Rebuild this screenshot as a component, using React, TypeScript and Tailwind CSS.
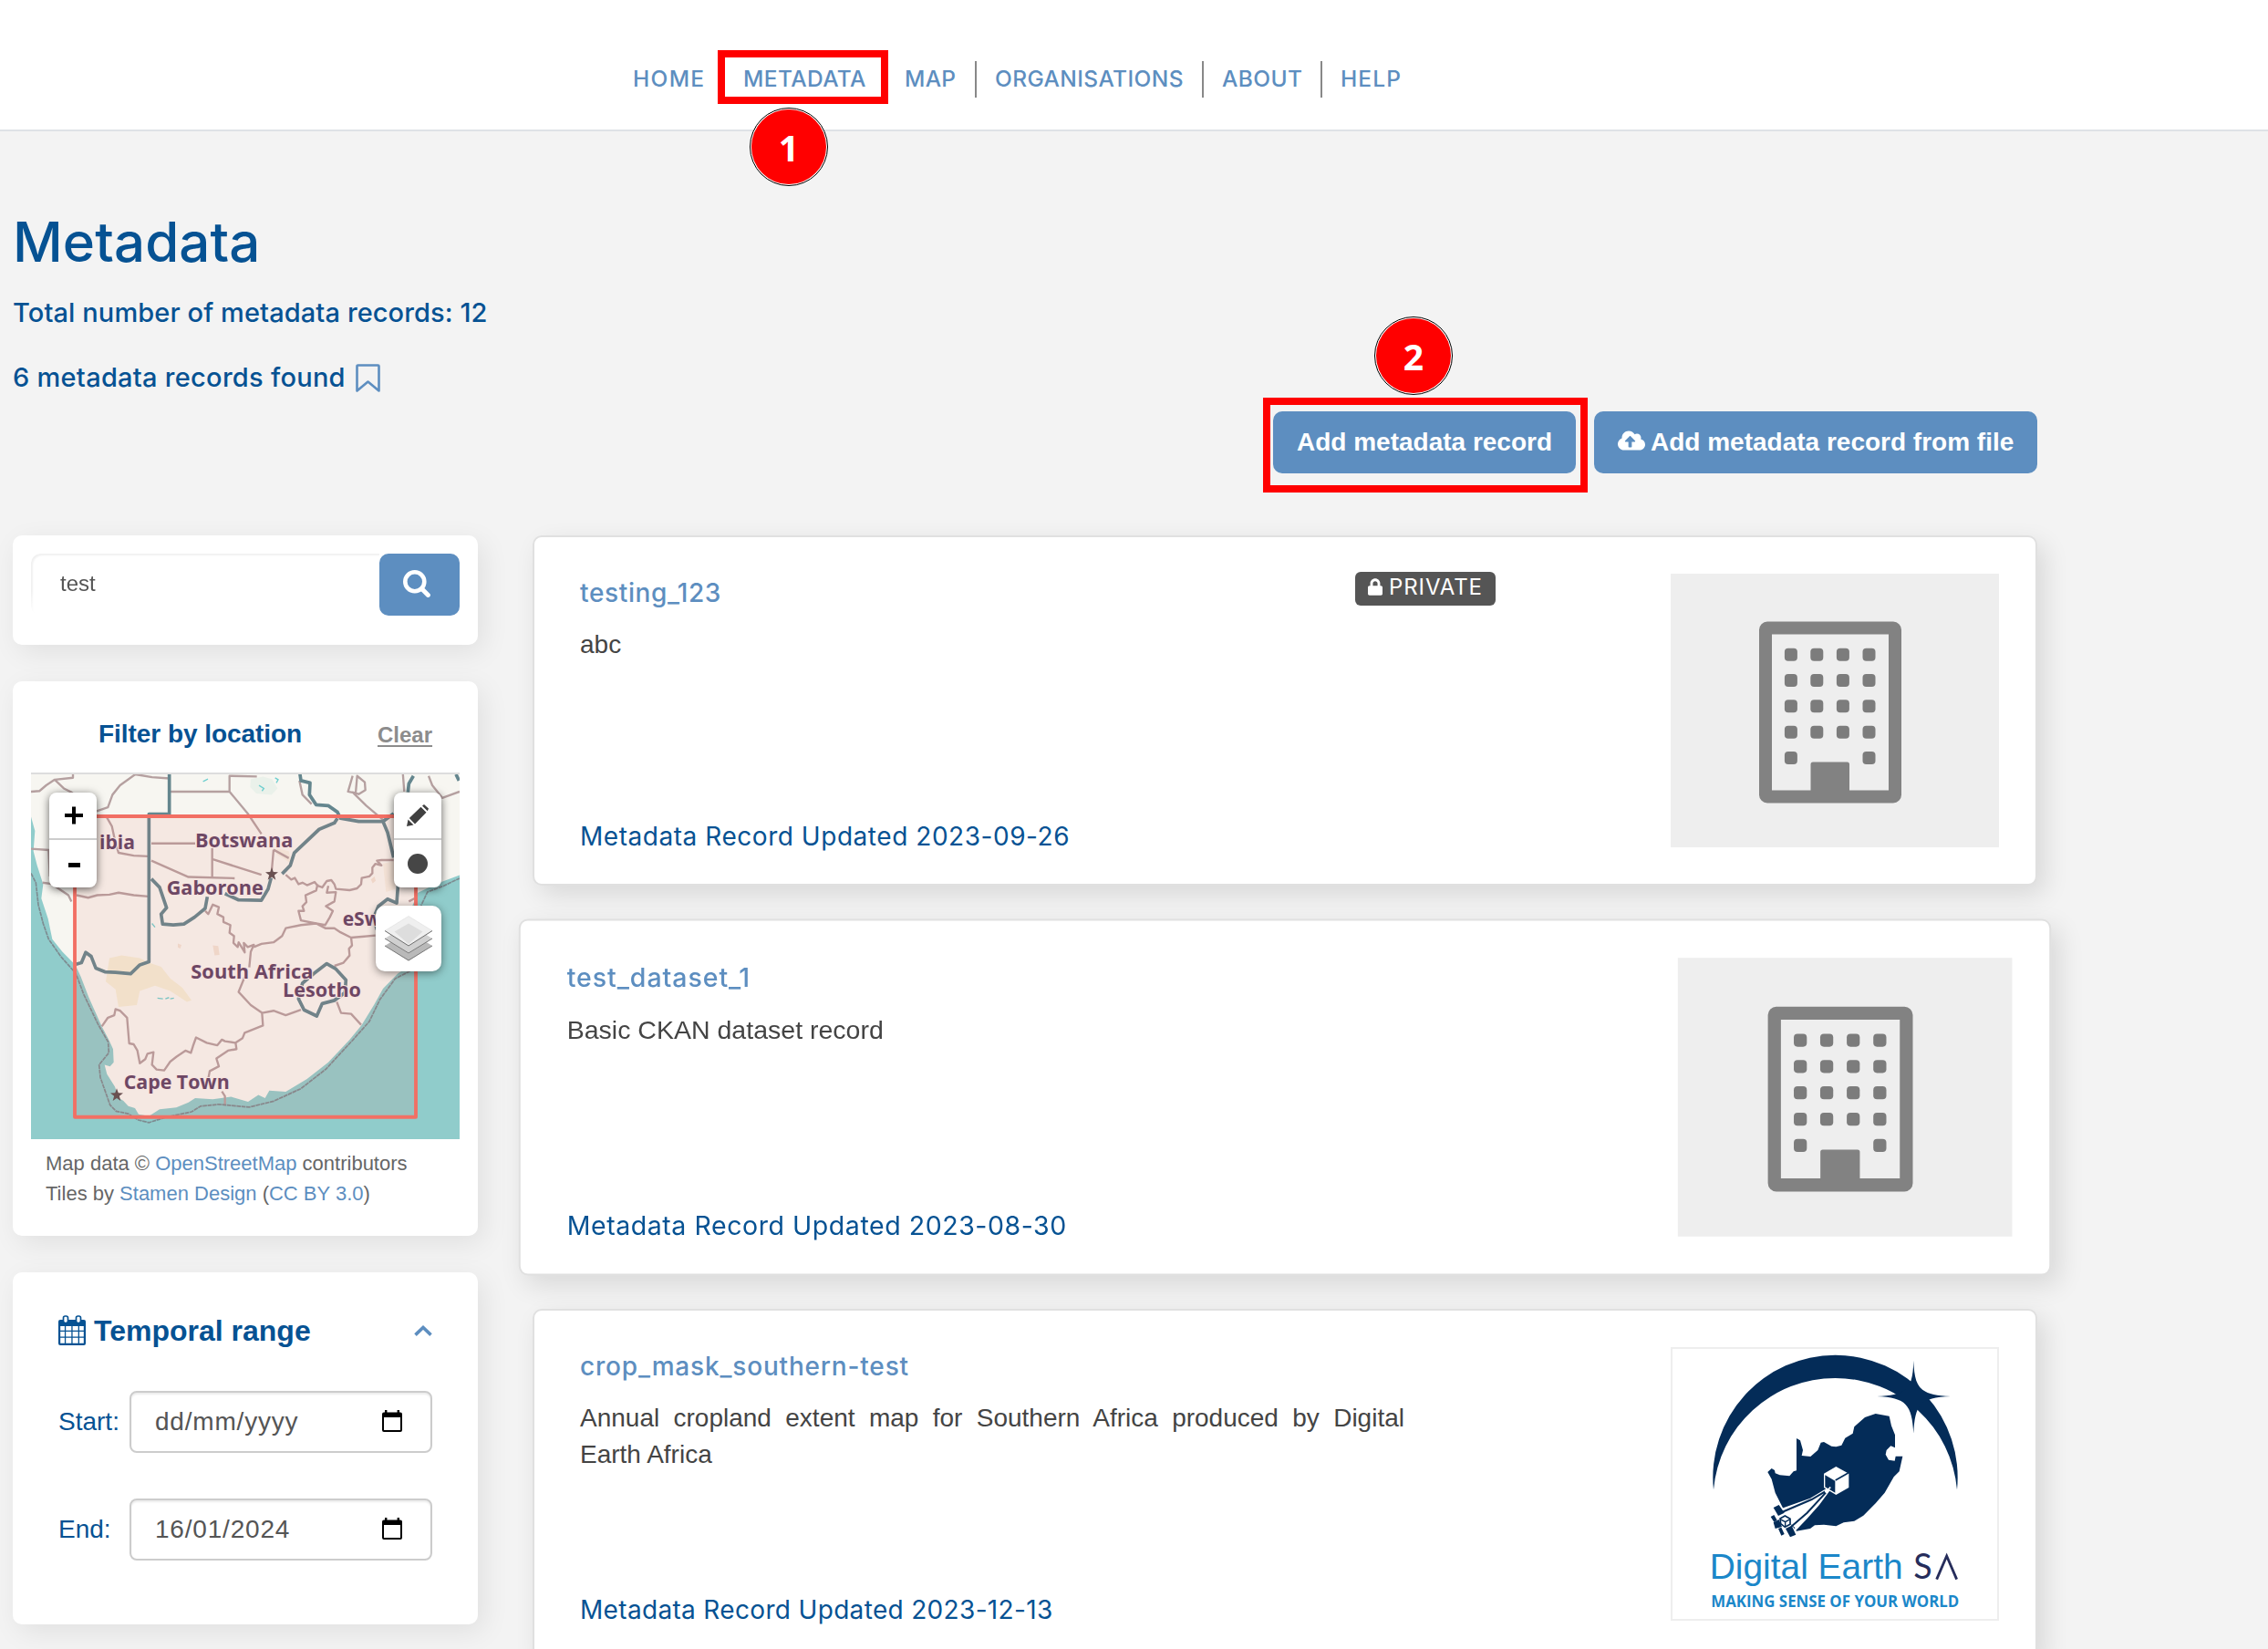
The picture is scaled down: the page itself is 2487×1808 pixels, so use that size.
import React from "react";
import { FaCloudUploadAlt, FaLock } from "react-icons/fa";

function Marker({ label, className }: { label: string; className: string }) {
  return (
    <span
      className={`absolute flex h-[86px] w-[86px] items-center justify-center rounded-full border-[1.5px] border-black bg-white p-px ${className}`}
    >
      <span className="flex h-full w-full items-center justify-center rounded-full bg-[#ff0000] font-['Open_Sans',sans-serif] text-[39px] leading-none font-bold tracking-normal text-white">
        {label}
      </span>
    </span>
  );
}

function Separator() {
  return <span className="mx-[20px] h-[40px] w-[2px] shrink-0 bg-[#888888]" />;
}

function Header() {
  return (
    <header className="flex h-[144px] items-start border-b-2 border-[#dee2e6] bg-white pt-[67px]">
      <nav className="ml-[694px] flex h-[40px] items-center text-[24.5px] leading-[36px] font-medium tracking-[0.4px] whitespace-nowrap text-[#5d8ec0]">
        <a className="mb-[2px] w-[77px] tracking-[1.3px]">HOME</a>
        <a className="relative mb-[2px] ml-[44px] w-[133px]">
          METADATA
          <span className="absolute -top-[13px] -left-[28px] h-[59px] w-[187px] border-8 border-[#ff0000]" />
          <Marker label="1" className="top-[50px] left-[7px]" />
        </a>
        <a className="mb-[2px] ml-[44px] w-[57px] tracking-[0.3px]">MAP</a>
        <Separator />
        <a className="mb-[2px] w-[207px]">ORGANISATIONS</a>
        <Separator />
        <a className="mb-[2px] w-[88px]">ABOUT</a>
        <Separator />
        <a className="mb-[2px] tracking-[1.1px]">HELP</a>
      </nav>
    </header>
  );
}

const card = "rounded-[10px] bg-white shadow-[6px_8px_30px_rgba(0,0,0,0.08)]";

function SearchCard() {
  return (
    <section className={`flex h-[120px] items-start px-[20px] pt-[20px] ${card}`}>
      <div className="flex h-[68px] w-[382px] items-center rounded-l-[10px] pb-[4px] pl-[32px] text-[24px] text-[#555555] shadow-[inset_2px_2px_2px_rgba(0,0,0,0.06)] [mask-image:linear-gradient(#000,#000_60%,transparent)]">
        <span className="pt-px">test</span>
      </div>
      <button className="flex h-[68px] w-[88px] items-center justify-center rounded-[10px] bg-[#5d8ec0] pr-[6px] pb-[3px]">
        <svg viewBox="0 0 30 30" className="h-[30px] w-[30px]" fill="none" stroke="#fff">
          <circle cx="12.800" cy="12.800" r="10.500" strokeWidth="4.600" />
          <path d="M20.500 20.500L27.400 27.400" strokeWidth="5" strokeLinecap="round" />
        </svg>
      </button>
    </section>
  );
}

const star = "M0-22L5.300-7.300L21-6.800L8.600 2.800L13 18L0 9L-13 18L-8.600 2.800L-21-6.800L-5.300-7.300Z";

function MapDrawing() {
  return (
    <svg viewBox="42 55 1410 1162" preserveAspectRatio="none" className="block h-[400px] w-[470px]">
      <rect x="42" y="55" width="1410" height="1162" fill="#90cccb" />
      <path
        fill="#f7f6f1"
        d="M42 49V190L55 235L50 300L62 345L82 405L76 450L98 515L112 580L145 620L188 662L206 700L232 765L275 858L298 900L312 930L314 972L302 985L284 980L292 1010L318 1050L330 1085L346 1095L362 1112L384 1118L396 1138L430 1144L465 1122L520 1116L560 1100L582 1086L640 1090L700 1082L756 1098L790 1076L812 1086L826 1062L880 1066L950 1025L1020 972L1090 900L1130 853L1170 790L1200 738L1250 688L1300 660L1306 560L1285 500L1315 432L1380 402L1452 376V49Z"
      />
      <path fill="#f3eed6" d="M300 640L340 632L400 640L430 655L470 668L500 705L540 735L570 775L555 780L500 745L450 728L400 745L390 790L330 796L320 740L288 715Z" />
      <path fill="#f0e2d4" d="M640 600l18 2l4 28l-16 2zM525 594l12 4l-4 12l-8-4zM1160 390l12-10l4 14l-10 8z" />
      <path fill="#f4efe2" d="M1200 340l40-10v90l-30 10zM850 290l40 10l10 40l-50-30z" />
      <path fill="#eaf1ea" d="M765 70l40-8l30 8l18 30l-20 20l-50-4l-20-20z" />
      <path fill="none" stroke="#6fcfcf" strokeWidth="4" d="M608 78l16-8M792 90l16 10l-6 8M845 66l10 6l-6 10M458 768l18 2M484 770l12-4M500 770l12-2M440 530l10 12" />
      <g fill="none" stroke="#b5a0a0" strokeWidth="7" strokeLinejoin="round">
        <path d="M42 110L70 108L92 90L120 72L180 66V50M120 72L150 100L175 112L205 135M258 172L295 160L310 120L335 90L385 55L440 64L498 68" />
        <path d="M290 190L308 220L318 265L330 305L380 314L428 316M42 292L100 296L104 380M80 400L110 404L165 440L175 460" />
        <path d="M192 440L230 448L260 440L300 438L330 432L380 440L428 444" />
        <path d="M500 110H695V60L785 62M695 110L755 180L800 245M438 275H582M438 330L560 382L712 386M638 290V385M638 325L800 375M840 295L890 322M840 295L834 360" />
        <path d="M925 75L935 120L965 150M1100 60L1085 110L1110 115L1115 60L1140 80L1142 105L1120 118L1100 112L1145 155L1200 200M1265 49L1270 110M1350 60L1362 90L1395 130L1452 110" />
        <path d="M880 375L898 390L910 385L922 405L935 400L950 408L975 398L985 410L1000 415L1015 395L1030 392L1040 405L1045 420L1090 424L1115 418L1128 405L1130 385L1155 380L1165 370L1165 352L1175 340L1195 345L1180 330L1195 328L1235 328" />
        <path d="M985 405L980 425L945 440L948 462L935 475L940 490L922 490L930 520L980 530L1010 535L1025 510L1035 490L1012 475L1040 460L1045 430L1015 432L1020 410" />
        <path d="M615 490L625 500L640 470L660 478L655 500L675 510L675 525L698 535L695 560L710 570L708 592L722 605L725 590L745 622L742 592L755 605L775 598L765 620L760 670M775 605L800 595L840 590L868 570L880 545L930 535L980 530L1010 545L1040 545L1060 558L1095 575L1130 572L1175 568" />
        <path d="M1095 575L1098 600L1088 610L1090 632L1070 655L1040 665M745 700L725 748L765 790L802 815L840 808L880 822L930 805M802 815L805 855L745 878L738 895L715 910L680 905L670 900L655 918L620 910L585 893L575 920L568 942L550 935L520 955L500 970L480 998L455 995L440 980L445 940L425 945L418 962L400 975L392 935L380 915L365 912L358 830L335 808L320 803L316 822L295 830L275 858" />
        <path d="M715 910L718 930L690 935L652 960L660 985L630 1000L625 1025M670 1065L680 1080V1110M1048 780L1062 815L1095 818L1128 853M1285 460L1304 450" />
      </g>
      <g fill="none" stroke="#64868e" strokeWidth="11" strokeLinejoin="round">
        <path d="M497 49V182H430V652L400 662L370 690L320 686L285 684L255 672L240 635L222 622L208 655L190 660" />
        <path d="M438 388L465 415L488 480L470 500L475 532L510 535L545 532L580 510L615 482L622 445M680 435L725 455L800 456L822 420L832 385M868 372L895 345L908 305L990 230L1040 210L1050 195" />
        <path d="M926 49L930 75L960 82L958 120L980 152L1020 155L1050 175L1060 195L1120 205L1200 205L1235 180M1200 205L1215 240L1235 320M1300 60L1285 85L1282 112" />
        <path d="M1250 400L1245 465L1215 452L1185 475L1170 510L1180 550M1440 55l10 20" />
        <path d="M972 690L1015 658L1045 675L1078 710L1075 750L1040 775L1000 785L982 825L940 805L922 770L935 720Z" />
      </g>
      <g fill="none" stroke="#7d8b90" strokeWidth="5" strokeDasharray="14 2">
        <path d="M42 370L58 400L66 470L82 530L100 580L140 635L190 690L215 755L262 850L296 908L298 942L266 980L270 1020L302 1108L322 1128L362 1136L395 1156L430 1164L490 1146L570 1130L600 1112L660 1106L760 1115L840 1096L930 1056L1012 994L1100 902L1155 842L1190 772L1240 706L1300 676" />
        <path d="M1310 545L1322 480L1346 430L1400 410L1452 386" />
      </g>
      <g fill="#5c4f50">
        <path d={star} transform="translate(834 373)" />
        <path d={star} transform="translate(324 1077)" />
      </g>
      <g
        className="font-['Open_Sans','Noto_Sans',sans-serif] font-bold"
        fill="#5f4365"
        stroke="#f9f1ee"
        strokeWidth="6"
        strokeLinejoin="round"
        paintOrder="stroke"
        fontSize="60"
      >
        <text x="267" y="293" textLength="117" lengthAdjust="spacingAndGlyphs">ibia</text>
        <text x="582" y="287" textLength="322" lengthAdjust="spacingAndGlyphs">Botswana</text>
        <text x="488" y="438" textLength="318" lengthAdjust="spacingAndGlyphs">Gaborone</text>
        <text x="1067" y="536" textLength="126" lengthAdjust="spacingAndGlyphs">eSw</text>
        <text x="568" y="706" textLength="402" lengthAdjust="spacingAndGlyphs">South Africa</text>
        <text x="870" y="763" textLength="258" lengthAdjust="spacingAndGlyphs">Lesotho</text>
        <text x="347" y="1058" textLength="348" lengthAdjust="spacingAndGlyphs">Cape Town</text>
      </g>
      <rect x="186" y="188.500" width="1122" height="958" fill="#f06f64" fillOpacity="0.1" stroke="#f26f64" strokeWidth="11.500" strokeLinejoin="round" />
    </svg>
  );
}

function MapPanel() {
  const group =
    "absolute flex w-[52px] flex-col overflow-hidden rounded-[8px] bg-white shadow-[0_2px_10px_rgba(0,0,0,0.6)]";
  return (
    <div className="relative mx-[20px] border-t-2 border-[#dddddd]">
      <MapDrawing />
      <div className={`top-[20px] left-[20px] ${group}`}>
        <span className="flex h-[52px] items-center justify-center border-b-2 border-[#cccccc]">
          <svg viewBox="0 0 20 20" className="mb-px ml-[2px] h-[20px] w-[20px]" fill="#000">
            <path d="M8 0.500h4v7.500h8v4h-8v7.500h-4v-7.500h-8v-4h8z" />
          </svg>
        </span>
        <span className="flex h-[52px] items-center justify-center">
          <span className="mt-[2px] ml-[2px] h-[5px] w-[13px] bg-black" />
        </span>
      </div>
      <div className={`top-[20px] left-[398px] ${group}`}>
        <span className="flex h-[52px] items-center justify-center border-b-2 border-[#cccccc]">
          <svg viewBox="0 0 24 24" className="h-[24px] w-[24px]" fill="#404040">
            <path d="M0 24l1.500-7.500l6 6zM2.800 15L15.500 2.800l6 6L9 21.500zM17 1.500L19 0l5 4.500l-1.200 2.700z" />
          </svg>
        </span>
        <span className="flex h-[52px] items-center justify-center">
          <span className="h-[22px] w-[22px] rounded-full bg-[#464646]" />
        </span>
      </div>
      <div className="absolute top-[144px] left-[378px] flex h-[72px] w-[72px] items-center justify-center rounded-[10px] bg-white shadow-[0_2px_10px_rgba(0,0,0,0.45)]">
        <svg viewBox="0 0 52 50" className="h-[50px] w-[52px]" strokeLinejoin="round">
          <path d="M0 33L26 17L52 33L26 49.500Z" fill="#b9b9b9" />
          <path d="M0 33L26 49L52 33" fill="none" stroke="#7a7a7a" />
          <path d="M0 25L26 9L52 25L26 41.500Z" fill="#d0d0d0" />
          <path d="M0 25L26 41L52 25" fill="none" stroke="#7a7a7a" />
          <path d="M0 16.500L26 0.500L52 16.500L26 33Z" fill="#efefef" stroke="#d9d9d9" strokeWidth="0.500" />
          <path d="M10.500 17.500L26 8.500L41.500 17.500L26 31Z" fill="#dddddd" />
          <path d="M0 16.500L26 33L52 16.500" fill="none" stroke="#6e6e6e" />
        </svg>
      </div>
    </div>
  );
}

function LocationCard() {
  return (
    <section className={`mt-[40px] h-[608px] ${card}`}>
      <div className="flex h-[100px] items-start pt-[38px] pl-[94px]">
        <h2 className="w-[306px] text-[28px] leading-[40px] font-bold tracking-[-0.05px] whitespace-nowrap text-[#065293]">Filter by location</h2>
        <a className="text-[24px] leading-[42px] font-bold text-[#8c8c8c] underline decoration-2 underline-offset-[3px]">Clear</a>
      </div>
      <MapPanel />
      <p className="mt-[10px] pl-[36px] text-[22px] leading-[33px] whitespace-nowrap text-[#666666]">
        Map data © <a className="text-[#5d8ec0]">OpenStreetMap</a> contributors
        <br />
        Tiles by <a className="text-[#5d8ec0]">Stamen Design</a> (<a className="text-[#5d8ec0]">CC BY 3.0</a>)
      </p>
    </section>
  );
}

function DateField({ label, value }: { label: string; value: string }) {
  return (
    <label className="flex h-[68px] items-center">
      <span className="w-[78px] text-[28px] text-[#065293]">{label}</span>
      <span className="flex h-[68px] w-[332px] items-center justify-between rounded-[8px] border-2 border-[#cccccc] pr-[31px] pl-[26px] text-[28px] tracking-[0.8px] text-[#555555] shadow-[inset_0_2px_2px_rgba(0,0,0,0.08)]">
        {value}
        <svg viewBox="0 0 22 24" className="mb-[2px] h-[24px] w-[22px]">
          <path fillRule="evenodd" d="M3 0h2.400v2.400h11.200V0H19v2.400h1A2 2 0 0 1 22 4.400V22a2 2 0 0 1-2 2H2a2 2 0 0 1-2-2V4.400A2 2 0 0 1 2 2.400h1zM2 8v14h18V8z" />
        </svg>
      </span>
    </label>
  );
}

function TemporalCard() {
  return (
    <section className={`mt-[40px] h-[386px] pt-[44px] pl-[50px] ${card}`}>
      <div className="flex h-[40px] w-[410px] items-center">
        <svg viewBox="0 0 30 33" className="mb-px h-[33px] w-[30px]" fill="#065293">
          <path fillRule="evenodd" d="M2 5H28A2 2 0 0 1 30 7V31A2 2 0 0 1 28 33H2A2 2 0 0 1 0 31V7A2 2 0 0 1 2 5ZM2.200 12V16.800H6.900V12ZM8.200 12V16.800H14.300V12ZM15.600 12V16.800H21.700V12ZM23 12V16.800H27.800V12ZM2.200 18V23.500H6.900V18ZM8.200 18V23.500H14.300V18ZM15.600 18V23.500H21.700V18ZM23 18V23.500H27.800V18ZM2.200 24.800V30.800H6.900V24.800ZM8.200 24.800V30.800H14.300V24.800ZM15.600 24.800V30.800H21.700V24.800ZM23 24.800V30.800H27.800V24.800Z" />
          <rect x="5.500" y="1" width="5" height="7.500" rx="2" fill="#fff" stroke="#065293" strokeWidth="1.700" />
          <rect x="19.500" y="1" width="5" height="7.500" rx="2" fill="#fff" stroke="#065293" strokeWidth="1.700" />
        </svg>
        <h2 className="ml-[9px] text-[32px] leading-[40px] font-bold text-[#065293]">Temporal range</h2>
        <svg viewBox="0 0 20 12" className="ml-auto h-[12px] w-[20px]" fill="none" stroke="#5d8ec0" strokeWidth="3.600">
          <path d="M1.500 10.600L10 2.500L18.500 10.600" />
        </svg>
      </div>
      <div className="mt-[46px] flex flex-col gap-[50px]">
        <DateField label="Start:" value="dd/mm/yyyy" />
        <DateField label="End:" value="16/01/2024" />
      </div>
    </section>
  );
}

const windowX = [131.9, 160.3, 188.9, 217.5];
const windowY = [88.7, 116.9, 145.3, 173.7, 202];

function BuildingPlaceholder() {
  return (
    <svg viewBox="0 0 360 300" className="h-[300px] w-[360px] bg-[#eeeeee]">
      <rect x="104" y="59.500" width="142" height="185" rx="2" fill="none" stroke="#828282" strokeWidth="14" strokeLinejoin="round" />
      <path fill="#828282" d="M153.500 209a2.500 2.500 0 0 1 2.500-2.500H193.500a2.500 2.500 0 0 1 2.500 2.500V240H153.500z" />
      {windowY.map((y, row) =>
        windowX.map((x, col) =>
          row === 4 && (col === 1 || col === 2) ? null : (
            <rect key={`${x}-${y}`} x={x - 7} y={y - 7} width="14" height="14" rx="4" fill="#7c7c7c" />
          ),
        ),
      )}
    </svg>
  );
}

function DigitalEarthLogo() {
  return (
    <svg viewBox="102 177 1068 888" className="h-[300px] w-[360px] border-2 border-[#eeeeee] bg-white">
      <g fill="#042c58">
        <path d="M237 640A402.500 402.500 0 1 1 1038 640A402 402 0 0 0 237 640Z" />
        <path d="M895 215C898 300 912 330 1017 333C915 337 900 360 895 455C890 360 870 337 775 333C880 330 892 300 895 215Z" />
        <path d="M415 582L428 570L438 576L440 586L455 592L487 595L500 580L510 577V471L522 478L531 510L527 528L556 531L580 510L590 485L600 483L625 497L640 499L658 494L670 470L695 455L700 433L735 402L770 390L815 398L822 430L834 460V502L820 496L806 510L803 524L813 542L833 545L836 530H859L848 580L830 598L800 650L770 685L730 725L700 743L665 748L640 760L600 755L570 757L555 768L510 776L480 740L465 700L440 650L428 605Z" />
      </g>
      <path fill="#fff" d="M460 702L555 668L612 634L622 640L585 690L545 735L500 782L505 765L470 735Z" />
      <path fill="none" stroke="#042c58" strokeWidth="6" d="M462 714L560 672L604 646M492 762L545 716L606 650" />
      <path fill="#fff" d="M640 564L682 587V633L640 657L600 633V587Z" />
      <path fill="#042c58" d="M604 592L637 611V650L604 631Z" />
      <path stroke="#042c58" strokeWidth="5" d="M638 609L680 585" />
      <path stroke="#fff" strokeWidth="5" d="M604 648L622 632" />
      <path fill="#042c58" d="M434 699L452 690L470 716L450 726ZM425 729L436 723L446 740L436 746ZM474 768L494 758L508 788L489 796ZM450 768L460 764L470 786L460 791ZM434 748L452 738L462 762L440 768Z" />
      <path fill="#fff" stroke="#042c58" strokeWidth="5" d="M456 735L472 726L489 736V754L472 763L458 752Z" />
      <path fill="none" stroke="#042c58" strokeWidth="4" d="M456 737L473 746L489 737M473 746V762" />
      <text x="224" y="933" fontSize="118" fill="#1b87c9" textLength="636" lengthAdjust="spacingAndGlyphs" className="font-['Liberation_Sans',Arial,sans-serif]">Digital Earth</text>
      <text x="895" y="933" fontSize="113" fill="#262d5b" className="font-['Lato',sans-serif]">S</text>
      <path d="M971 935L1004 858L1037 935" fill="none" stroke="#262d5b" strokeWidth="8.500" />
      <text x="229" y="1026" fontSize="51" fill="#1b87c9" textLength="816" lengthAdjust="spacingAndGlyphs" className="font-['Open_Sans',sans-serif] font-bold">MAKING SENSE OF YOUR WORLD</text>
    </svg>
  );
}

type RecordProps = {
  title: string;
  titleClass: string;
  description: string;
  updated: string;
  updatedClass: string;
  isPrivate?: boolean;
  className?: string;
  children: React.ReactNode;
};

function RecordCard({ title, titleClass, description, updated, updatedClass, isPrivate, className = "", children }: RecordProps) {
  return (
    <article
      className={`flex h-[384px] w-[1650px] shrink-0 justify-between rounded-[10px] border-2 border-[#e0e0e0] bg-white pr-[40px] pl-[50px] shadow-[8px_10px_28px_rgba(0,0,0,0.11)] ${className}`}
    >
      <div className="flex w-[1004px] flex-col pt-[41px] pb-[32px]">
        <div className="flex h-[40px] items-start justify-between">
          <h3 className={`text-[28px] leading-[40px] font-medium text-[#5d8ec0] ${titleClass}`}>{title}</h3>
          {isPrivate && (
            <span className="-mt-[3px] flex h-[37px] w-[154px] items-center rounded-[6px] bg-[#555555] pb-[4px] pl-[14px] text-[24px] leading-[32px] tracking-[0.9px] whitespace-nowrap text-white">
              <FaLock className="mr-[7px] h-[19px] w-[16px]" />
              PRIVATE
            </span>
          )}
        </div>
        <p className="mt-[17px] w-[904px] text-justify font-['Liberation_Sans',Arial,sans-serif] text-[28px] leading-[40px] text-[#444444]">
          {description}
        </p>
        <p className={`mt-auto text-[28px] leading-[40px] whitespace-nowrap text-[#065293] ${updatedClass}`}>
          Metadata Record Updated {updated}
        </p>
      </div>
      <div className="pt-[40px]">{children}</div>
    </article>
  );
}

export default function App() {
  return (
    <div className="h-[1808px] w-[2487px] overflow-hidden bg-[#f3f3f3] font-['Inter',sans-serif]">
      <Header />
      <main className="ml-[14px] w-[2220px] pt-[86px]">
        <h1 className="text-[60px] leading-[70px] font-medium tracking-[0.1px] text-[#065293]">Metadata</h1>
        <p className="mt-[23px] text-[29px] leading-[40px] font-medium tracking-[0.1px] text-[#065293]">Total number of metadata records: 12</p>
        <p className="mt-[31px] flex text-[29px] leading-[40px] font-medium tracking-[0.27px] text-[#065293]">
          6 metadata records found
          <svg viewBox="0 0 27 31" className="mt-[5px] ml-[11px] h-[31px] w-[27px]" fill="none" stroke="#5d8ec0" strokeWidth="2.600" strokeLinejoin="round">
            <path d="M1.500 29.500V2.500A1 1 0 0 1 2.500 1.500H24.500A1 1 0 0 1 25.500 2.500V29.500L13.500 19.500Z" />
          </svg>
        </p>
        <div className="mt-[17px] flex h-[68px] justify-end gap-[20px] font-['Liberation_Sans',Arial,sans-serif] text-[28px] font-bold whitespace-nowrap text-white">
          <a className="relative flex w-[332px] items-center justify-center rounded-[10px] bg-[#5d8ec0]">
            Add metadata record
            <span className="absolute -top-[15px] -left-[11px] h-[104px] w-[356px] border-8 border-[#ff0000]" />
            <Marker label="2" className="-top-[104px] left-[111px]" />
          </a>
          <a className="flex w-[486px] items-center rounded-[10px] bg-[#5d8ec0] pl-[26px]">
            <FaCloudUploadAlt className="mr-[6px] mb-[4px] h-[30px] w-[30px]" />
            Add metadata record from file
          </a>
        </div>
        <div className="mt-[68px] flex items-start justify-between">
          <aside className="w-[510px] font-['Liberation_Sans',Arial,sans-serif]">
            <SearchCard />
            <LocationCard />
            <TemporalCard />
          </aside>
          <div className="flex flex-col gap-[40px]">
            <RecordCard
              title="testing_123"
              titleClass="tracking-[0.65px]"
              description="abc"
              updated="2023-09-26"
              updatedClass="tracking-[0.54px]"
              isPrivate
            >
              <BuildingPlaceholder />
            </RecordCard>
            <RecordCard
              title="test_dataset_1"
              titleClass="tracking-[0.92px]"
              description="Basic CKAN dataset record"
              updated="2023-08-30"
              updatedClass="tracking-[0.54px]"
              className="scale-[1.0185]"
            >
              <BuildingPlaceholder />
            </RecordCard>
            <RecordCard
              title="crop_mask_southern-test"
              titleClass="tracking-[0.82px]"
              description="Annual cropland extent map for Southern Africa produced by Digital Earth Africa"
              updated="2023-12-13"
              updatedClass="tracking-[0.33px]"
            >
              <DigitalEarthLogo />
            </RecordCard>
          </div>
        </div>
      </main>
    </div>
  );
}
